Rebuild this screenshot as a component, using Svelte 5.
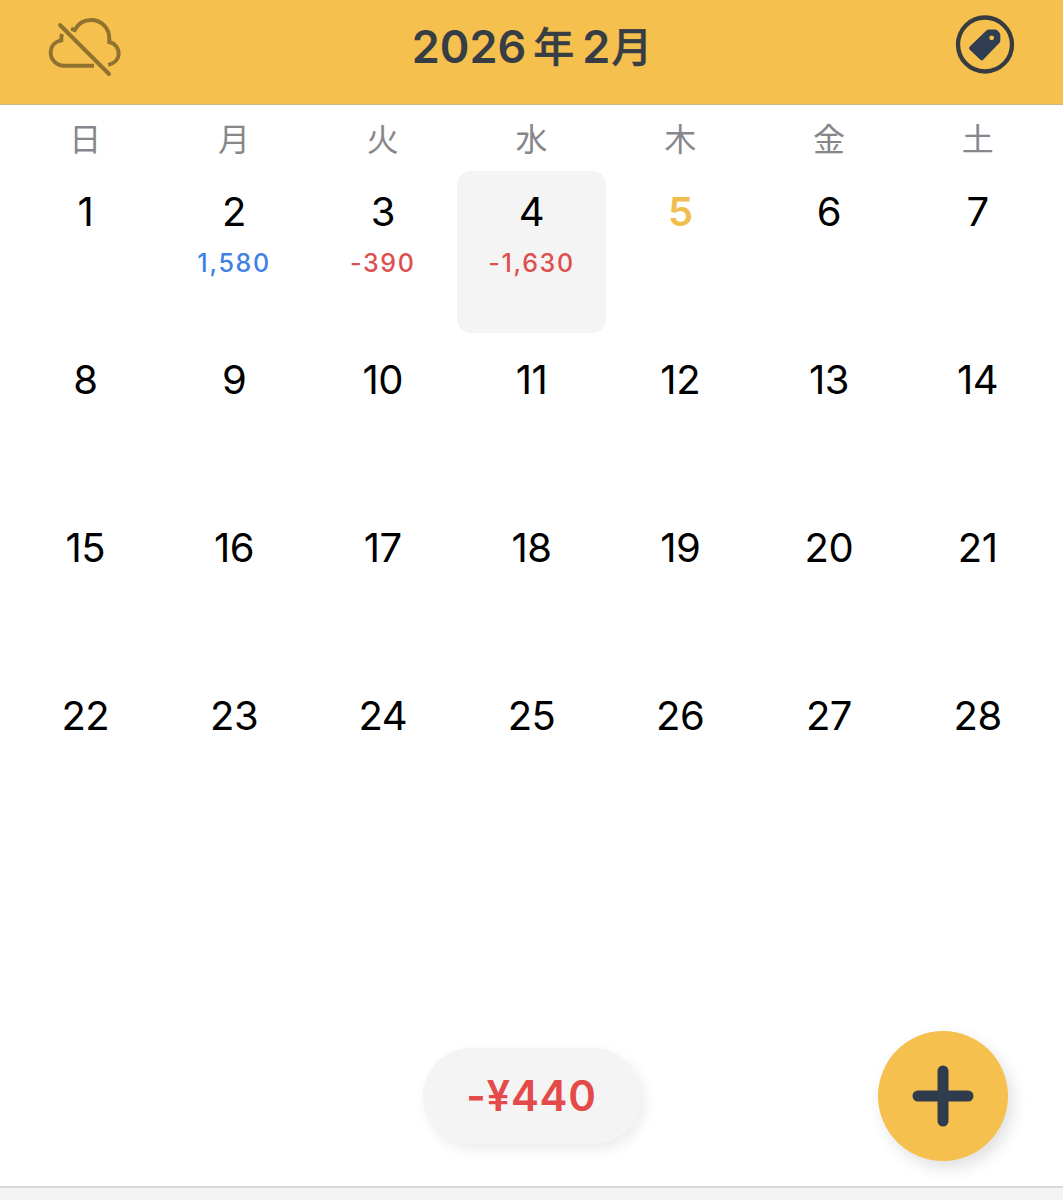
<script>
const weekdays = ['日', '月', '火', '水', '木', '金', '土']
const today = 5
const amounts = { 2: 1580, 3: -390, 4: -1630 }

let selected = $state(4)

const days = Array.from({ length: 28 }, (_, i) => i + 1)
const total = Object.values(amounts).reduce((sum, n) => sum + n, 0)

function formatTotal(n) {
  return (n < 0 ? '-¥' : '¥') + Math.abs(n).toLocaleString('en-US')
}
</script>

<div class="screen">
  <header class="header">
    <button class="icon-btn cloud" aria-label="Sync off">
      <svg width="80" height="66" viewBox="0 0 80 66" fill="none" stroke="currentColor" stroke-width="3.9">
        <path d="M17 20C16.3 22 16.2 24 16.3 26.3C9.5 27.5 5.7 32.5 5.7 39C5.7 46 12 51.7 19.3 51.7H49" />
        <path d="M26 14.7L29.7 16C33 10 39 6 46 6C56.5 6 64.3 14 64.3 24.5V28C70 29.5 73.7 34 73.7 39.3C73.7 45 69.5 49.5 63.2 50.9" />
        <path d="M15 11L64 60" stroke-linecap="round" />
      </svg>
    </button>
    <h1 class="title">2026<span class="kanji year">年</span>2<span class="kanji month">月</span></h1>
    <button class="icon-btn tag" aria-label="Categories">
      <svg width="60" height="60" viewBox="0 0 60 60">
        <circle cx="30" cy="30.5" r="27" fill="none" stroke="#363b40" stroke-width="4.3" />
        <path
          fill="#2f3c52"
          fill-rule="evenodd"
          d="M34 15.5H40.3Q41.6 15.5 42.5 16.5L44.6 18.9Q45.3 19.8 45.3 21V26.4Q45.3 27.9 44.3 29L28.4 45.5Q26.8 47.2 25.1 45.6L14.8 35.8Q13.2 34.2 14.8 32.6L31.4 16.6Q32.5 15.5 34 15.5ZM36.7 21.4A2.4 2.4 0 1 0 36.7 26.2A2.4 2.4 0 1 0 36.7 21.4Z"
        />
      </svg>
    </button>
  </header>

  <div class="weekdays">
    {#each weekdays as name}
      <span>{name}</span>
    {/each}
  </div>

  <div class="days">
    {#each days as day}
      <button
        class="day"
        class:selected={day === selected}
        class:today={day === today}
        onclick={() => selected = day}
      >
        <span class="number">{day}</span>
        {#if amounts[day]}
          <span class="amount" class:minus={amounts[day] < 0}>{amounts[day].toLocaleString('en-US')}</span>
        {/if}
      </button>
    {/each}
  </div>

  <div class="actions">
    <div class="total">{formatTotal(total)}</div>
    <button class="add" aria-label="Add">
      <svg width="62" height="62" viewBox="0 0 62 62" stroke="#2f3c4e" stroke-width="11" stroke-linecap="round">
        <path d="M31 6V56M6 31H56" />
      </svg>
    </button>
  </div>

  <div class="bottom-bar"></div>
</div>

<style>
  :global(body) {
    background: #fff;
  }

  .screen {
    display: flex;
    flex-direction: column;
    height: 1200px;
    overflow: hidden;
    font-family: Inter, 'Noto Sans CJK JP', sans-serif;
    color: #000;
  }

  button {
    border: none;
    background: none;
    padding: 0;
    font: inherit;
    color: inherit;
    cursor: pointer;
  }

  svg {
    display: block;
  }

  .header {
    box-sizing: border-box;
    height: 105px;
    display: grid;
    grid-template-columns: 1fr auto 1fr;
    align-items: start;
    padding: 14px 48px 0 45px;
    background: #f5c04d;
    border-bottom: 1px solid #cbb98c;
  }

  .cloud {
    color: #8f7230;
    justify-self: start;
  }

  .tag {
    justify-self: end;
  }

  .title {
    margin: 0;
    padding-left: 4px;
    font-size: 45px;
    line-height: 65px;
    font-weight: 600;
    color: #363d45;
    white-space: nowrap;
  }

  .kanji {
    font-family: 'Noto Sans CJK JP', sans-serif;
    font-size: 41px;
    line-height: 1;
    font-weight: 500;
    vertical-align: 1px;
    -webkit-text-stroke: 0.5px currentColor;
  }

  .year {
    margin: 0 8px 0 7px;
  }

  .month {
    margin-left: 1px;
  }

  .weekdays {
    display: grid;
    grid-template-columns: repeat(7, 1fr);
    height: 66px;
    padding: 0 11px;
    line-height: 70px;
    font-size: 32px;
    text-align: center;
    color: #87878b;
  }

  .days {
    flex: 1;
    display: grid;
    grid-template-columns: repeat(7, 1fr);
    grid-auto-rows: 162px;
    row-gap: 6px;
    padding: 0 11px;
  }

  .day {
    display: flex;
    flex-direction: column;
    align-items: center;
    border-radius: 14px;
  }

  .day.selected {
    background: #f4f4f4;
  }

  .number {
    margin-top: 17px;
    font-size: 40px;
    line-height: 48px;
    letter-spacing: -0.5px;
  }

  .today .number {
    font-weight: 600;
    color: #f0be4f;
  }

  .amount {
    margin-top: 12px;
    font-size: 25px;
    line-height: 30px;
    font-weight: 500;
    letter-spacing: 1.7px;
    color: #4280e4;
  }

  .amount.minus {
    color: #de4f4f;
  }

  .actions {
    display: grid;
    grid-template-columns: 1fr auto 1fr;
    align-items: center;
    padding: 0 55px 25px;
  }

  .total {
    grid-column: 2;
    width: 218px;
    height: 96px;
    border-radius: 48px;
    background: #f4f4f4;
    box-shadow: 4px 6px 14px rgba(0, 0, 0, 0.08);
    color: #e44a49;
    font-size: 42px;
    line-height: 96px;
    font-weight: 600;
    letter-spacing: 0.7px;
    text-align: center;
  }

  .add {
    justify-self: end;
    width: 130px;
    height: 130px;
    border-radius: 50%;
    background: #f5c04d;
    box-shadow: 5px 7px 16px rgba(0, 0, 0, 0.12);
    display: flex;
    align-items: center;
    justify-content: center;
  }

  .bottom-bar {
    box-sizing: border-box;
    height: 14px;
    background: #f4f4f4;
    border-top: 2px solid #d9d9d9;
  }
</style>
